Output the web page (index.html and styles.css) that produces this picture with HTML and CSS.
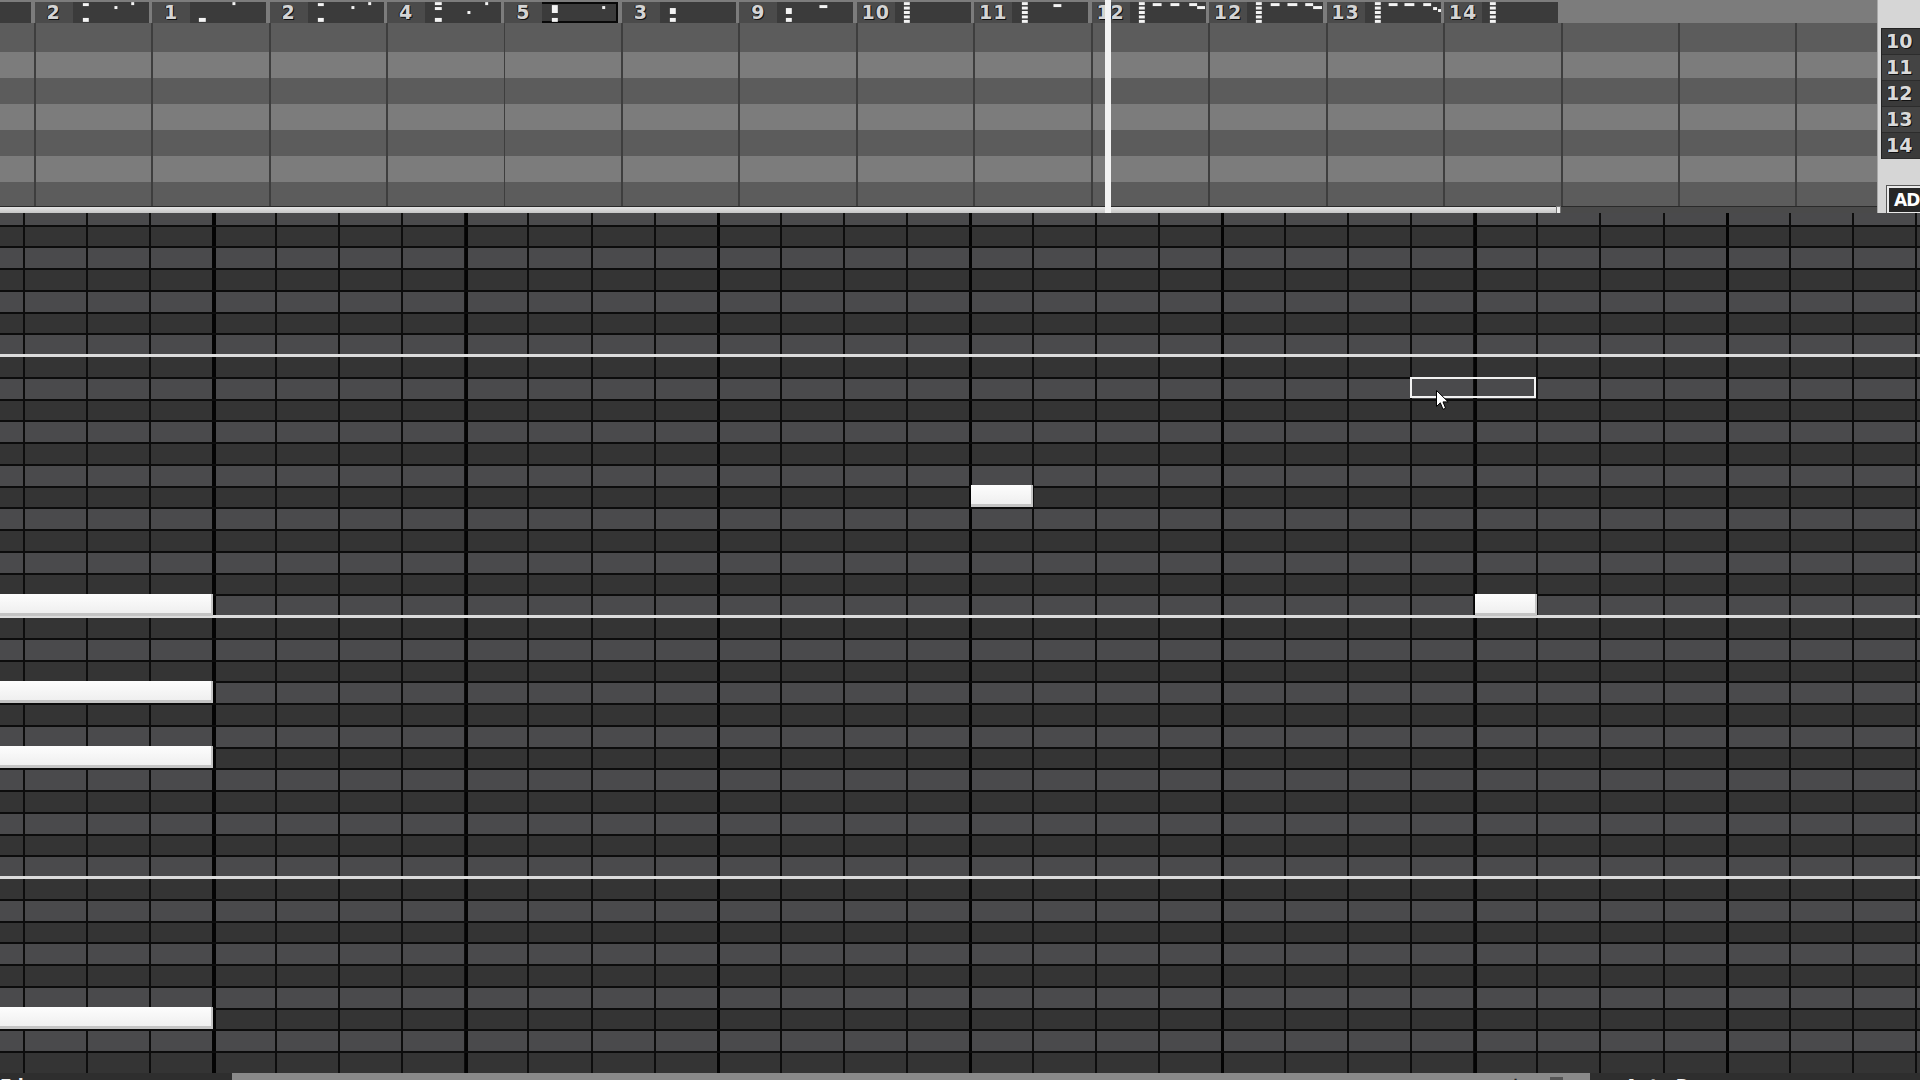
FILE: index.html
```html
<!DOCTYPE html>
<html>
<head>
<meta charset="utf-8">
<link rel="stylesheet" href="styles.css">
</head>
<body>
<div class="app">
  <div class="top">
    <div class="playlist">
      <div class="hdr">
        <div class="cell"><div class="clip"><span class="tag"></span></div></div>
        <div class="cell"><div class="clip"><span class="tag">2</span><svg class="mini" viewBox="0 0 77 21"><rect x="10" y="1" width="6" height="3"/><rect x="10" y="16" width="6" height="4"/><rect x="42" y="4" width="3" height="3"/><rect x="59" y="0" width="3" height="3"/></svg></div></div>
        <div class="cell"><div class="clip"><span class="tag">1</span><svg class="mini" viewBox="0 0 77 21"><rect x="9" y="16" width="7" height="4"/><rect x="43" y="0" width="3" height="3"/></svg></div></div>
        <div class="cell"><div class="clip"><span class="tag">2</span><svg class="mini" viewBox="0 0 77 21"><rect x="10" y="1" width="6" height="3"/><rect x="10" y="16" width="6" height="4"/><rect x="44" y="4" width="3" height="3"/><rect x="61" y="0" width="3" height="3"/></svg></div></div>
        <div class="cell"><div class="clip"><span class="tag">4</span><svg class="mini" viewBox="0 0 77 21"><rect x="10" y="0" width="7" height="3"/><rect x="10" y="5" width="7" height="3"/><rect x="10" y="16" width="7" height="4"/><rect x="43" y="9" width="3" height="3"/><rect x="61" y="0" width="3" height="3"/></svg></div></div>
        <div class="cell"><div class="clip sel"><span class="tag">5</span><svg class="mini" viewBox="0 0 77 21"><rect x="10" y="3" width="6" height="8"/><rect x="10" y="16" width="6" height="4"/><rect x="61" y="4" width="3" height="3"/></svg></div></div>
        <div class="cell"><div class="clip"><span class="tag">3</span><svg class="mini" viewBox="0 0 77 21"><rect x="10" y="6" width="6" height="6"/><rect x="10" y="16" width="6" height="4"/></svg></div></div>
        <div class="cell"><div class="clip"><span class="tag">9</span><svg class="mini" viewBox="0 0 77 21"><rect x="9" y="6" width="6" height="6"/><rect x="9" y="16" width="6" height="4"/><rect x="43" y="3" width="8" height="3"/></svg></div></div>
        <div class="cell"><div class="clip"><span class="tag">10</span><svg class="mini" viewBox="0 0 77 21"><rect x="9" y="0" width="6" height="3"/><rect x="9" y="4.5" width="6" height="3"/><rect x="9" y="9" width="6" height="3"/><rect x="9" y="13.5" width="6" height="3"/><rect x="9" y="18" width="6" height="3"/></svg></div></div>
        <div class="cell"><div class="clip"><span class="tag">11</span><svg class="mini" viewBox="0 0 77 21"><rect x="10" y="0" width="6" height="3"/><rect x="10" y="4.5" width="6" height="3"/><rect x="10" y="9" width="6" height="3"/><rect x="10" y="13.5" width="6" height="3"/><rect x="10" y="18" width="6" height="3"/><rect x="42" y="2" width="8" height="3"/></svg></div></div>
        <div class="cell"><div class="clip"><span class="tag">12</span><svg class="mini" viewBox="0 0 77 21"><rect x="9" y="0" width="6" height="3"/><rect x="9" y="4.5" width="6" height="3"/><rect x="9" y="9" width="6" height="3"/><rect x="9" y="13.5" width="6" height="3"/><rect x="9" y="18" width="6" height="3"/><rect x="23" y="1" width="9" height="3"/><rect x="41" y="1" width="9" height="3"/><rect x="60" y="1" width="8" height="3"/><rect x="68" y="4" width="8" height="3"/></svg></div></div>
        <div class="cell"><div class="clip"><span class="tag">12</span><svg class="mini" viewBox="0 0 77 21"><rect x="9" y="0" width="6" height="3"/><rect x="9" y="4.5" width="6" height="3"/><rect x="9" y="9" width="6" height="3"/><rect x="9" y="13.5" width="6" height="3"/><rect x="9" y="18" width="6" height="3"/><rect x="24" y="1" width="9" height="3"/><rect x="41" y="1" width="10" height="3"/><rect x="59" y="1" width="8" height="3"/><rect x="67" y="4" width="9" height="3"/></svg></div></div>
        <div class="cell"><div class="clip"><span class="tag">13</span><svg class="mini" viewBox="0 0 77 21"><rect x="10" y="0" width="6" height="3"/><rect x="10" y="4.5" width="6" height="3"/><rect x="10" y="9" width="6" height="3"/><rect x="10" y="13.5" width="6" height="3"/><rect x="10" y="18" width="6" height="3"/><rect x="24" y="1" width="9" height="3"/><rect x="40" y="1" width="10" height="3"/><rect x="59" y="1" width="8" height="3"/><rect x="69" y="5" width="4" height="3"/><rect x="74" y="7" width="3" height="3"/></svg></div></div>
        <div class="cell"><div class="clip"><span class="tag">14</span><svg class="mini" viewBox="0 0 77 21"><rect x="8" y="0" width="6" height="3"/><rect x="8" y="4.5" width="6" height="3"/><rect x="8" y="9" width="6" height="3"/><rect x="8" y="13.5" width="6" height="3"/><rect x="8" y="18" width="6" height="3"/></svg></div></div>
      </div>
      <div class="lanes">
        <div class="lane dk first"></div>
        <div class="lane lt"></div>
        <div class="lane dk"></div>
        <div class="lane lt"></div>
        <div class="lane dk"></div>
        <div class="lane lt"></div>
        <div class="lane dk last"></div>
      </div>
      <div class="scroll"><div class="thumb"><span class="cap"></span></div></div>
      <div class="playhead"></div>
    </div>
    <div class="side">
      <div class="chlist">
        <div class="ch">10</div>
        <div class="ch">11</div>
        <div class="ch">12</div>
        <div class="ch">13</div>
        <div class="ch">14</div>
      </div>
      <div class="adbtn">AD</div>
    </div>
  </div>

  <div class="roll">
    <div class="rows">
      <div class="r l"></div><div class="r d"></div><div class="r l"></div><div class="r d"></div>
      <div class="r l"></div><div class="r d"></div><div class="r l o"></div><div class="r d"></div>
      <div class="r l"></div><div class="r d"></div><div class="r l"></div><div class="r d"></div>
      <div class="r l"></div><div class="r d"></div><div class="r l"></div><div class="r d"></div>
      <div class="r l"></div><div class="r d"></div><div class="r l o"></div><div class="r d"></div>
      <div class="r l"></div><div class="r d"></div><div class="r l"></div><div class="r d"></div>
      <div class="r l"></div><div class="r d"></div><div class="r l"></div><div class="r d"></div>
      <div class="r l"></div><div class="r d"></div><div class="r l o"></div><div class="r d"></div>
      <div class="r l"></div><div class="r d"></div><div class="r l"></div><div class="r d"></div>
      <div class="r l"></div><div class="r d"></div><div class="r l"></div><div class="r d"></div>

      <div class="note" style="top:389px;left:0;width:213px"></div>
      <div class="note" style="top:476px;left:0;width:213px"></div>
      <div class="note" style="top:541.25px;left:0;width:213px"></div>
      <div class="note" style="top:802.25px;left:0;width:213px"></div>
      <div class="note" style="top:280.25px;left:971px;width:62px"></div>
      <div class="note" style="top:389px;left:1475px;width:62px"></div>
      <div class="selbox" style="top:172.5px;left:1410px;width:126px"></div>
      <svg class="cursor" width="13" height="21" viewBox="0 0 13 21"><path d="M0.5 0.5 L0.5 16.5 L4.3 12.8 L7 19.3 L9.6 18.2 L7 11.9 L12.2 11.9 Z" fill="#fff" stroke="#000" stroke-width="1"/></svg>
    </div>
  </div>

  <div class="status">
    <div class="st-left">Edges</div>
    <div class="st-bar"><span class="st-g1">+</span><span class="st-g2"></span></div>
    <div class="st-right">• Auto Damp</div>
  </div>
</div>
</body>
</html>
```
FILE: styles.css
```css
html, body {
  margin: 0;
  padding: 0;
  width: 1920px;
  height: 1080px;
  overflow: hidden;
  background: #333;
  font-family: "DejaVu Sans", "Liberation Sans", sans-serif;
}

.app {
  display: flex;
  flex-direction: column;
  width: 1920px;
  height: 1080px;
}

/* ---------- top playlist ---------- */
.top {
  display: flex;
  height: 213px;
  flex: none;
}

.playlist {
  position: relative;
  flex: 1;
  display: flex;
  flex-direction: column;
  overflow: hidden;
}

.hdr {
  height: 23px;
  display: flex;
  margin-left: -82.75px;
  background: #7c7c7c;
  flex: none;
}

.cell {
  width: 117.45px;
  flex: none;
  padding-top: 2px;
  box-sizing: border-box;
}

.clip {
  width: 114px;
  height: 21px;
  display: flex;
  align-items: center;
  background: #3b3b3b;
  box-sizing: border-box;
}

.clip.sel {
  border: 2px solid #080808;
}

.clip.sel .tag {
  margin-left: -2px;
}

.tag {
  width: 38px;
  height: 21px;
  flex: none;
  display: flex;
  align-items: center;
  justify-content: center;
  background: #4b4b4b;
  color: #d4d4d4;
  font-weight: bold;
  font-size: 19px;
  line-height: 19px;
  letter-spacing: 1px;
  text-shadow: 1px 1px 0 #111, -1px 0 0 #1a1a1a;
}

.mini {
  width: 76px;
  height: 21px;
  flex: none;
  fill: #f4f4f4;
}

.lanes {
  display: flex;
  flex-direction: column;
  flex: none;
}

.lane {
  height: 26px;
  background-image: repeating-linear-gradient(90deg, transparent 0 33.7px, #3e3e3e 33.7px 35.7px, transparent 35.7px 117.45px);
}

.lane.first { height: 29px; }
.lane.last { height: 24px; }
.lane.dk { background-color: #5c5c5c; }
.lane.lt { background-color: #7c7c7c; }

.scroll {
  height: 7px;
  flex: none;
  background: #4a4a4a;
  border-top: 1px solid #2a2a2a;
  box-sizing: border-box;
}

.thumb {
  position: relative;
  width: 1561px;
  height: 6px;
  background: linear-gradient(#e4e4e4, #c6c6c6);
}

.cap {
  position: absolute;
  right: 0;
  top: -1px;
  width: 5px;
  height: 9px;
  background: #ececec;
  border: 1px solid #777;
  box-sizing: border-box;
}

.playhead {
  position: absolute;
  left: 1105px;
  top: 0;
  bottom: 0;
  width: 6px;
  background: #f3f3f3;
}

.side {
  width: 43px;
  flex: none;
  background: #d6d6d6;
  border-left: 1px solid #a8a8a8;
  box-sizing: border-box;
  padding-top: 28px;
  padding-left: 3px;
  display: flex;
  flex-direction: column;
}

.chlist {
  background: #3a3a3a;
  border-top: 1px solid #222;
  border-left: 1px solid #222;
}

.ch {
  height: 26px;
  box-sizing: border-box;
  border-bottom: 1px solid #2c2c2c;
  color: #dadada;
  font-weight: bold;
  font-size: 19px;
  line-height: 25px;
  padding-left: 4px;
  text-shadow: 1px 1px 0 #111, -1px 0 0 #1a1a1a;
  white-space: nowrap;
}

.ch:nth-child(even) { background: #444; }

.adbtn {
  margin-top: 27px;
  margin-left: 6px;
  height: 28px;
  background: #262626;
  border: 2px solid #eaeaea;
  border-right: none;
  box-shadow: 0 0 0 1px #555;
  box-sizing: border-box;
  color: #fff;
  font-weight: bold;
  font-size: 17px;
  line-height: 24px;
  padding-left: 5px;
  letter-spacing: -1px;
  white-space: nowrap;
}

/* ---------- piano roll grid ---------- */
.roll {
  height: 860px;
  flex: none;
  overflow: hidden;
  background: #4b4b4d;
}

.rows {
  position: relative;
  margin-top: -8.25px;
  display: flex;
  flex-direction: column;
}

.r {
  height: 21.75px;
  flex: none;
  box-sizing: border-box;
  border-bottom: 2px solid #0c0c0c;
  background-image:
    repeating-linear-gradient(90deg, transparent 0 212.5px, #030303 212.5px 215.5px, transparent 215.5px 252.24px),
    repeating-linear-gradient(90deg, transparent 0 23px, #0d0d0d 23px 25px, transparent 25px 63.06px);
}

.r.l { background-color: #4a4a4c; }
.r.d { background-color: #343434; }
.r.o { border-bottom: 3px solid #dcdcdc; }

.note {
  position: absolute;
  height: 22px;
  background: linear-gradient(#fdfdfd, #ededed);
  box-shadow: inset -2px -3px 0 #c4c4c4;
}

.selbox {
  position: absolute;
  height: 21px;
  border: 2px solid #f2f2f2;
  box-sizing: border-box;
}

.cursor {
  position: absolute;
  left: 1436px;
  top: 185.5px;
}

/* ---------- status strip ---------- */
.status {
  flex: none;
  height: 20px;
  display: flex;
  font-weight: bold;
  font-size: 17px;
  line-height: 20px;
}

.st-left {
  width: 232px;
  flex: none;
  background: #2e2e2e;
  color: #f0f0f0;
  padding-top: 3px;
}

.st-bar {
  width: 1358px;
  flex: none;
  background: #8a8a8a;
  position: relative;
}

.st-g1 {
  position: absolute;
  left: 1276px;
  top: 1px;
  color: #222;
  font-size: 18px;
}

.st-g2 {
  position: absolute;
  left: 1318px;
  top: 4px;
  width: 13px;
  height: 4px;
  background: #555;
}

.st-right {
  flex: 1;
  background: #2e2e2e;
  color: #f4f4f4;
  padding-left: 18px;
  padding-top: 3px;
  white-space: nowrap;
}
```
